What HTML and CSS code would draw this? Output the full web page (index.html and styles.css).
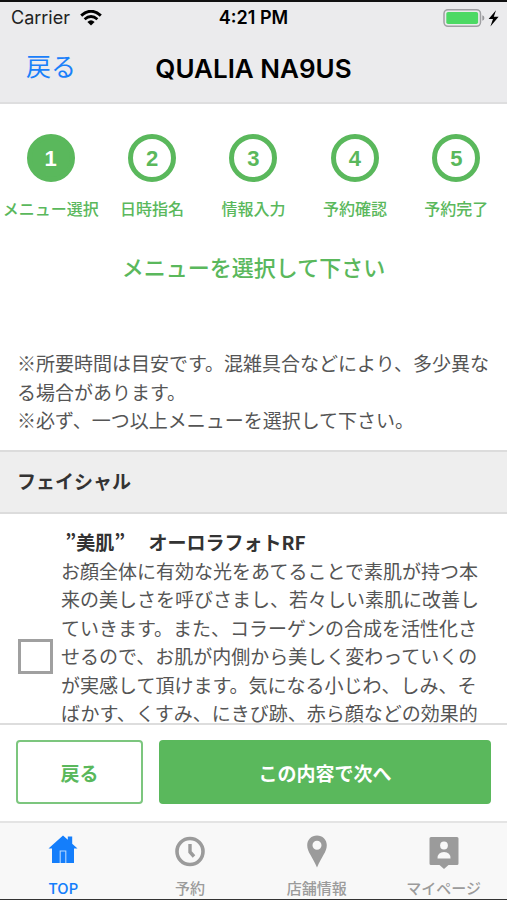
FILE: index.html
```html
<!DOCTYPE html>
<html lang="ja">
<head>
<meta charset="utf-8">
<meta name="viewport" content="width=device-width, initial-scale=1">
<title>QUALIA NA9US</title>
<link rel="stylesheet" href="styles.css">
</head>
<body>
<div class="app">
  <header class="top">
    <div class="status">
      <div class="status-left">
        <span>Carrier</span>
        <svg class="wifi" viewBox="0 0 22 16" aria-hidden="true">
          <path d="M1.2 5.6Q11-3 20.8 5.6" fill="none" stroke="#000" stroke-width="3"/>
          <path d="M4.6 9.3Q11 3.7 17.4 9.3" fill="none" stroke="#000" stroke-width="2.8"/>
          <path d="M7.4 12Q11 8.6 14.6 12L11 15.6Z" fill="#000"/>
        </svg>
      </div>
      <span class="clock">4:21 PM</span>
      <div class="status-right">
        <svg class="battery" viewBox="0 0 56 20" aria-hidden="true">
          <rect x="1" y="1.7" width="36.5" height="16.6" rx="4" fill="none" stroke="#a0a0a3" stroke-width="1.5"/>
          <rect x="3.3" y="4" width="31.8" height="12" rx="1.8" fill="#4cd964"/>
          <path d="M39.3 7.2Q41.4 8 41.4 10T39.3 12.8Z" fill="#98989b"/>
          <path d="M53 2.2L45.6 11H50L47.4 18.4L55.6 8.8H50.8Z" fill="#000"/>
        </svg>
      </div>
    </div>
    <nav class="navbar">
      <a class="nav-back" href="#">戻る</a>
      <h1>QUALIA NA9US</h1>
    </nav>
  </header>

  <main class="content">
    <ol class="steps">
      <li><span class="circle current">1</span><span>メニュー選択</span></li>
      <li><span class="circle">2</span><span>日時指名</span></li>
      <li><span class="circle">3</span><span>情報入力</span></li>
      <li><span class="circle">4</span><span>予約確認</span></li>
      <li><span class="circle">5</span><span>予約完了</span></li>
    </ol>
    <h2 class="prompt">メニューを選択して下さい</h2>
    <div class="notes">
      <p>※所要時間は目安です。混雑具合などにより、多少異なる場合があります。</p>
      <p>※必ず、一つ以上メニューを選択して下さい。</p>
    </div>
    <h3 class="category">フェイシャル</h3>
    <div class="item">
      <input type="checkbox" id="menu-1">
      <label for="menu-1"><strong>&nbsp;”美肌”&nbsp;　オーロラフォトRF</strong>お顔全体に有効な光をあてることで素肌が持つ本来の美しさを呼びさまし、若々しい素肌に改善していきます。また、コラーゲンの合成を活性化させるので、お肌が内側から美しく変わっていくのが実感して頂けます。気になる小じわ、しみ、そばかす、くすみ、にきび跡、赤ら顔などの効果的</label>
    </div>
  </main>

  <div class="actions">
    <button type="button" class="btn btn-outline">戻る</button>
    <button type="button" class="btn btn-primary">この内容で次へ</button>
  </div>

  <nav class="tabs">
    <a class="active" href="#">
      <svg viewBox="0 0 32 34" aria-hidden="true"><path d="M16 1.5L1.5 14.5H5V29H27V14.5H30.5L25.2 9.8V2.5H20.8V5.8Z" fill="currentColor"/><path d="M13.2 29V17H18.8V29" fill="none" stroke="#b4d8ff" stroke-width="1.1"/></svg>
      <span>TOP</span>
    </a>
    <a href="#">
      <svg viewBox="0 0 32 34" aria-hidden="true"><circle cx="16" cy="17.5" r="13" fill="none" stroke="currentColor" stroke-width="3.6"/><path d="M16 10V18L20 22.5" fill="none" stroke="currentColor" stroke-width="3.4"/></svg>
      <span>予約</span>
    </a>
    <a href="#">
      <svg viewBox="0 0 32 34" aria-hidden="true"><path fill-rule="evenodd" d="M16 1.5C10.5 1.5 6.2 5.6 6.2 11.2C6.2 18 11.5 22.5 16 33.5C20.5 22.5 25.8 18 25.8 11.2C25.8 5.6 21.5 1.5 16 1.5ZM16 6.8A4.5 4.5 0 1 1 16 15.8A4.5 4.5 0 1 1 16 6.8Z" fill="currentColor"/></svg>
      <span>店舗情報</span>
    </a>
    <a href="#">
      <svg viewBox="0 0 32 34" aria-hidden="true"><path d="M3 3H29Q30.5 3 30.5 4.5V29.5Q30.5 31 29 31H20.5L16 35L11.5 31H3Q1.5 31 1.5 29.5V4.5Q1.5 3 3 3Z" fill="currentColor"/><circle cx="16" cy="11.5" r="3.9" fill="#f8f8f8"/><path d="M9.5 24.5Q9.5 18 16 18T22.5 24.5Z" fill="#f8f8f8"/></svg>
      <span>マイページ</span>
    </a>
  </nav>
</div>
</body>
</html>
```
FILE: styles.css
```css
* {
  box-sizing: border-box;
}

body {
  margin: 0;
  background: #fff;
  color: #555;
  font-family: "Noto Sans CJK JP", sans-serif;
  font-size: 19px;
  line-height: 1.5;
}

h1, h2, h3, p, ol {
  margin: 0;
  padding: 0;
}

a {
  color: inherit;
  text-decoration: none;
}

.app {
  display: flex;
  flex-direction: column;
  height: 100vh;
  border-top: 2px solid #111;
  border-bottom: 1px solid #333;
}

.top {
  flex: none;
  background: #ebebed;
  border-bottom: 2px solid #dededf;
  color: #000;
  font-family: Inter, "Noto Sans CJK JP", sans-serif;
}

.status {
  display: grid;
  grid-template-columns: 1fr auto 1fr;
  align-items: center;
  height: 32px;
  padding: 0 8px;
  font-size: 18px;
  line-height: 32px;
}

.status-left {
  display: flex;
  align-items: center;
  gap: 10px;
  padding-left: 3px;
  color: #222;
}

.wifi {
  width: 22px;
  height: 16px;
}

.clock {
  padding-left: 6px;
  font-weight: 600;
  padding: 0;
}

.status-right {
  display: flex;
  justify-content: flex-end;
}

.battery {
  width: 56px;
  height: 20px;
}

.navbar {
  display: grid;
  grid-template-columns: 1fr auto 1fr;
  align-items: center;
  height: 68px;
  padding: 0 26px;
}

.nav-back {
  color: #1a80fa;
  font-size: 25px;
}

h1 {
  font-size: 26px;
  font-weight: 600;
}

.content {
  flex: 1;
  min-height: 0;
  overflow-y: auto;
  scrollbar-width: none;
}

.steps {
  display: grid;
  grid-template-columns: repeat(5, 1fr);
  padding-top: 30px;
  list-style: none;
  color: #5ab85c;
  font-size: 16px;
  font-weight: 500;
}

.steps li {
  display: flex;
  flex-direction: column;
  align-items: center;
  gap: 14px;
  white-space: nowrap;
}

.circle {
  display: grid;
  place-items: center;
  width: 48px;
  height: 48px;
  border: 5px solid #5ab85c;
  border-radius: 50%;
  font-family: "Liberation Sans", sans-serif;
  font-size: 22px;
  font-weight: 700;
}

.circle.current {
  background: #5ab85c;
  color: #fff;
}

.prompt {
  padding-top: 30px;
  color: #5ab85c;
  font-size: 22px;
  font-weight: 500;
  text-align: center;
}

.notes {
  padding: 66px 12px 15px 17px;
}

.category {
  padding: 15px 17px 17px;
  border-top: 2px solid #dcdcdc;
  border-bottom: 2px solid #dcdcdc;
  background: #eee;
  color: #333;
  font-size: 19px;
  font-weight: 700;
}

.item {
  display: flex;
  gap: 8px;
  min-height: 284px;
  padding: 14px 26px 14px 18px;
}

.item input {
  flex: none;
  align-self: center;
  appearance: none;
  width: 35px;
  height: 35px;
  margin: 0;
  border: 3px solid #a0a0a0;
  background: #fff;
}

.item label {
  flex: 1;
  align-self: flex-start;
}

.item strong {
  display: block;
  color: #333;
}

.actions {
  display: flex;
  flex: none;
  gap: 16px;
  padding: 15px 16px 17px;
  border-top: 2px solid #ddd;
  background: #fff;
}

.btn {
  height: 64px;
  padding: 0;
  border: 2px solid #5ab85c;
  border-radius: 4px;
  font-family: inherit;
  font-size: 19px;
  font-weight: 700;
}

.btn-outline {
  flex: 3;
  border-color: #7cc67e;
  background: #fff;
  color: #5ab85c;
}

.btn-primary {
  flex: 8;
  background: #5ab85c;
  color: #fff;
}

.tabs {
  display: grid;
  flex: none;
  grid-template-columns: repeat(4, 1fr);
  height: 78px;
  border-top: 2px solid #e4e4e4;
  background: #f8f8f8;
  color: #9b9b9b;
  font-size: 15px;
  font-weight: 500;
}

.tabs a {
  display: flex;
  flex-direction: column;
  align-items: center;
  justify-content: space-between;
  padding-top: 11px;
}

.tabs svg {
  width: 32px;
  height: 34px;
  overflow: visible;
}

.tabs .active {
  color: #147efb;
}
```
